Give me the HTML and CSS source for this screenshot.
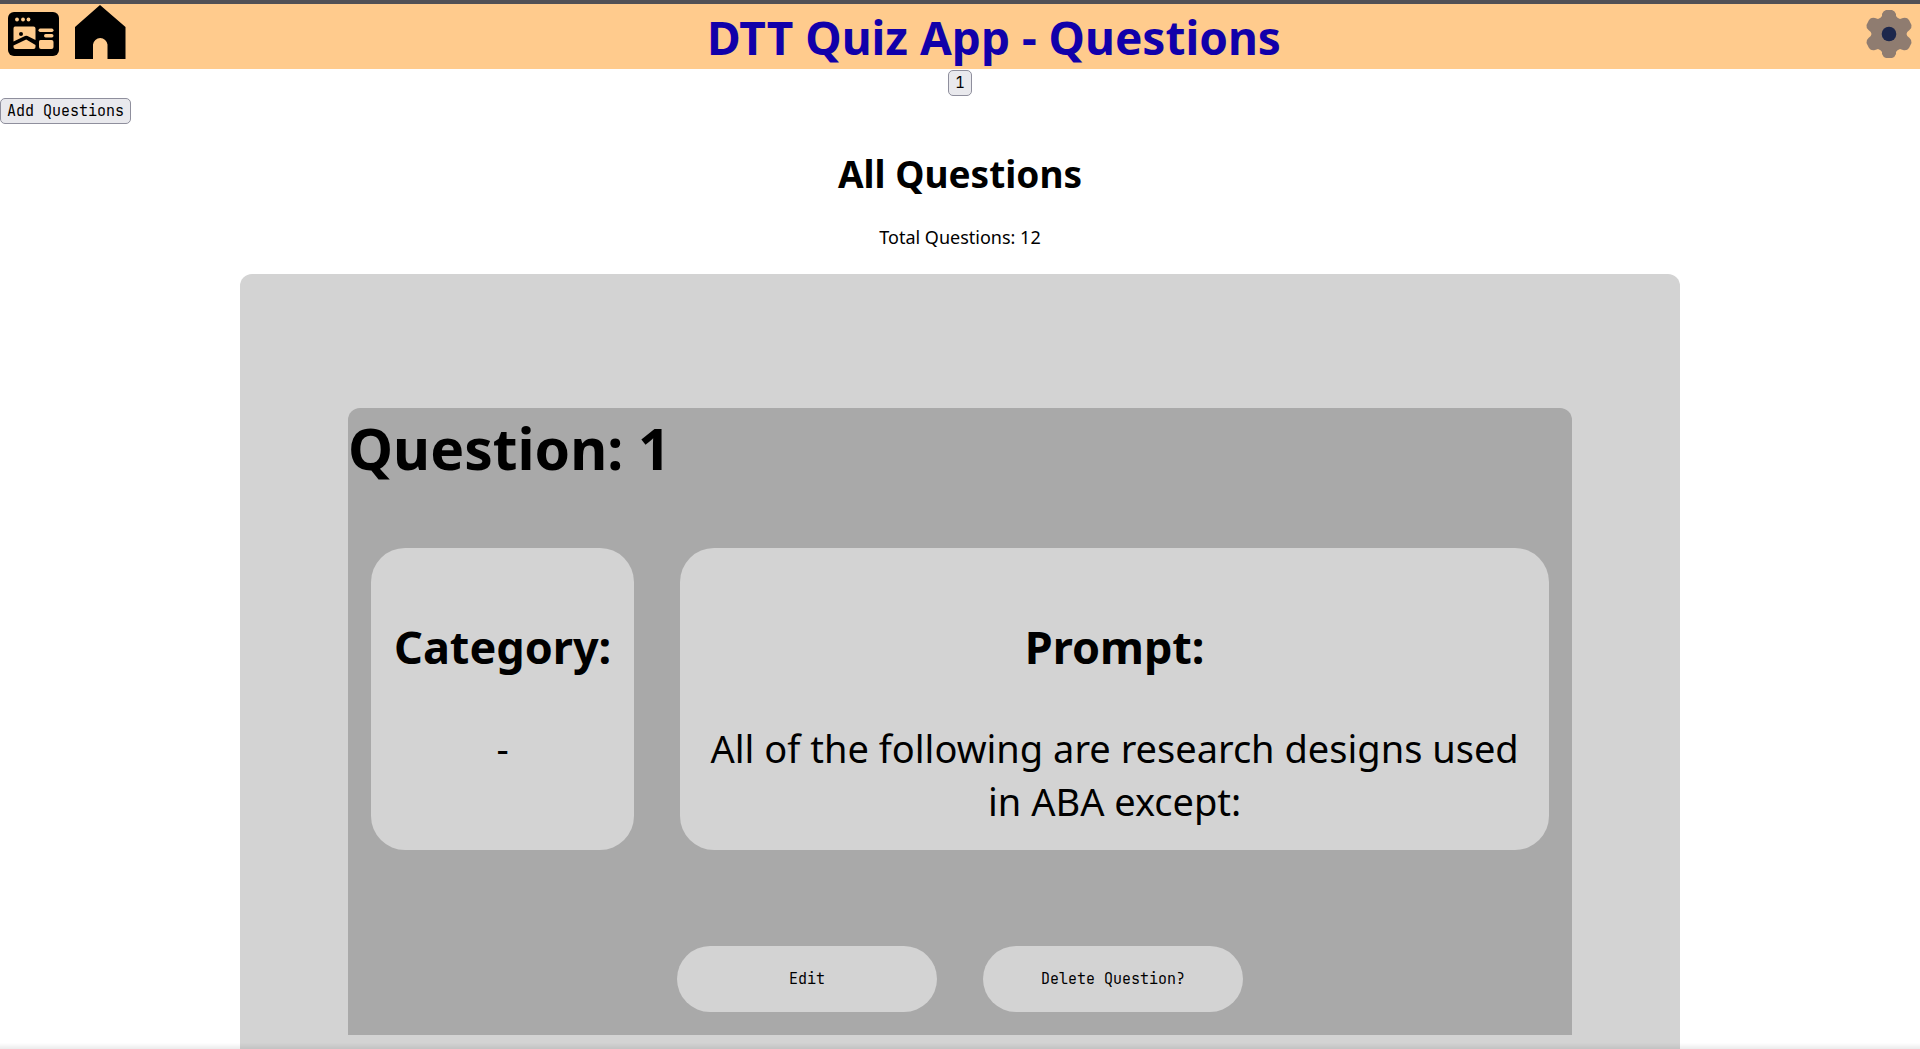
FILE: index.html
```html
<!DOCTYPE html>
<html lang="en">
<head>
<meta charset="utf-8">
<title>DTT Quiz App - Questions</title>
<link rel="stylesheet" href="styles.css">
</head>
<body>
<header class="header">
  <nav class="nav">
    <a href="#" class="nav-link" aria-label="Dashboard">
      <svg width="52" height="48" viewBox="0 -4 52 48">
        <rect x="0" y="0" width="51" height="44" rx="6"/>
        <g fill="#ffcb8d">
          <circle cx="9" cy="7.500" r="1.900"/><circle cx="15" cy="7.500" r="1.900"/><circle cx="20.500" cy="7.500" r="1.900"/>
          <path d="M7 14.500H25.500Q27.500 14.500 27.500 16.500V28L19.500 24Q18.300 23.400 17 24L5.500 29.500V16.500Q5.500 14.500 7 14.500Z"/>
          <path d="M5.500 33.500L18.200 27.500L27.500 33V35Q27.500 37 25.500 37H7.500Q5.500 37 5.500 35Z"/>
          <rect x="30.500" y="16.500" width="15" height="3.500" rx="1.700"/>
          <rect x="36" y="22" width="9.500" height="3.500" rx="1.700"/>
          <path d="M32.500 28H43.500Q45.500 28 45.500 30V35Q45.500 37 43.500 37H33Q31 37 31 35V29.500Q31 28 32.500 28Z"/>
        </g>
        <circle cx="13" cy="22" r="2"/>
      </svg>
    </a>
    <a href="#" class="nav-link" aria-label="Home">
      <svg width="51" height="54" viewBox="0 0 51 54"><path d="M25 0L50.500 22V54H32.500V39.500A7.300 7.300 0 0 0 18 39.500V54H0V22Z"/></svg>
    </a>
  </nav>
  <h1 class="title">DTT Quiz App - Questions</h1>
  <button class="settings" aria-label="Settings">
    <svg width="46" height="48" viewBox="0 0 46 48">
      <path fill="#8f7c70" d="M20 0H26Q29 1 30 4V6Q31 8 34 9L37 8Q41 7 43 10L45.500 15Q46 18 43.500 20Q40.500 22 40.500 24Q40.500 26 43.500 28Q46 30 45.500 33L43 38Q41 41 37 40L34 39Q31 40 30 42V44Q29 47 26 48H20Q17 47 16 44V42Q15 40 12 39L9 40Q5 41 3 38L.500 33Q0 30 2.500 28Q5.500 26 5.500 24Q5.500 22 2.500 20Q0 18 .500 15L3 10Q5 7 9 8L12 9Q15 8 16 6V4Q17 1 20 0Z"/>
      <circle cx="23" cy="24" r="7.300" fill="#1c274c"/>
    </svg>
  </button>
</header>
<main>
  <div class="pages"><button class="small-button">1</button></div>
  <button class="small-button">Add Questions</button>
  <h2 class="heading">All Questions</h2>
  <p class="total">Total Questions: 12</p>
  <section class="panel">
    <article class="card">
      <h2 class="question">Question: 1</h2>
      <div class="details">
        <section class="detail">
          <h3 class="label">Category:</h3>
          <p class="value">-</p>
        </section>
        <section class="detail detail-wide">
          <h3 class="label">Prompt:</h3>
          <p class="value">All of the following are research designs used in ABA except:</p>
        </section>
      </div>
      <div class="actions">
        <button class="action">Edit</button>
        <button class="action">Delete Question?</button>
      </div>
    </article>
  </section>
</main>
</body>
</html>
```
FILE: styles.css
```css
* {
  box-sizing: border-box;
}

body {
  margin: 0;
  font-family: "Noto Sans", sans-serif;
  color: #000;
  background: #fff;
}

/* faint shade along the bottom edge of the window */
body::after {
  content: "";
  position: fixed;
  right: 0;
  bottom: 0;
  left: 0;
  height: 6px;
  background: linear-gradient(transparent, rgba(0, 0, 0, 0.08));
  pointer-events: none;
}

h1, h2, h3, p {
  margin: 0;
}

button {
  font-family: "JetBrains Mono", "Liberation Mono", monospace;
  font-size: 15px;
  color: #000;
}

.header {
  display: flex;
  align-items: flex-start;
  justify-content: space-between;
  padding: 1px 8px 0;
  border-top: 4px solid #515055;
  background: #ffcb8d;
}

.nav {
  display: flex;
  align-items: center;
  gap: 15px;
}

.nav-link {
  display: flex;
  color: #000;
}

.title {
  padding-top: 1px;
  font-size: 46px;
  line-height: 63px;
  color: #1100aa;
}

.settings {
  display: flex;
  padding: 5px 0 0 4px;
  border: 0;
  background: none;
}

.pages {
  display: flex;
  justify-content: center;
  padding: 1px 0 2px;
}

.small-button {
  display: block;
  height: 26px;
  padding: 0 6px;
  border: 1px solid #8f8f9d;
  border-radius: 5px;
  background: #e9e9ed;
}

.heading {
  margin-top: 24px;
  font-size: 37px;
  line-height: 52px;
  text-align: center;
}

.total {
  margin: 24px 0;
  font-size: 18px;
  line-height: 26px;
  text-align: center;
}

.panel {
  width: 75%;
  margin: 0 auto;
  padding: 134px 0 96px;
  border-radius: 12px;
  background: #d3d3d3;
}

.card {
  width: 85%;
  margin: 0 auto;
  padding-bottom: 23px;
  border-radius: 12px 12px 0 0;
  background: #a9a9a9;
}

.question {
  font-size: 57px;
  line-height: 80px;
}

.details {
  display: flex;
  gap: 46px;
  margin: 60px 23px 96px;
}

.detail {
  padding: 68px 23px 22px;
  border-radius: 34px;
  background: #d3d3d3;
  text-align: center;
}

.detail-wide {
  flex: 1;
}

.label {
  margin-bottom: 44px;
  font-size: 45px;
  line-height: 62px;
}

.value {
  font-size: 38px;
  line-height: 53px;
}

.actions {
  display: flex;
  justify-content: center;
  gap: 46px;
}

.action {
  width: 260px;
  height: 66px;
  border: 0;
  border-radius: 33px;
  background: #d3d3d3;
}
```
